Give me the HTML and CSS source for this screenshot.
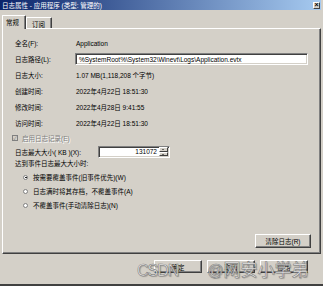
FILE: index.html
```html
<!DOCTYPE html>
<html lang="zh">
    <head>
        <meta charset="UTF-8">
        <meta name="viewport" content="width=device-width, initial-scale=1.0">
        <title>日志属性</title>
        <link rel="stylesheet" href="styles.css">
    </head>
    <body>
        <div class="window">
            <div class="titlebar">
                <span class="title">日志属性 - 应用程序 (类型: 管理的)</span>
                <span class="close">×</span>
            </div>
            <div class="tabs">
                <div class="tab active">常规</div>
                <div class="tab">订阅</div>
            </div>
            <div class="panel">
                <div class="row"><span class="label">全名(F):</span><span>Application</span></div>
                <div class="row"><span class="label">日志路径(L):</span><div class="field path">%SystemRoot%\System32\Winevt\Logs\Application.evtx</div></div>
                <div class="row"><span class="label">日志大小:</span><span>1.07 MB(1,118,208 个字节)</span></div>
                <div class="row"><span class="label">创建时间:</span><span>2022年4月22日 18:51:30</span></div>
                <div class="row"><span class="label">修改时间:</span><span>2022年4月28日 9:41:55</span></div>
                <div class="row"><span class="label">访问时间:</span><span>2022年4月22日 18:51:30</span></div>

                <div class="check"><span class="box">✓</span>启用日志记录(E)</div>

                <div class="row size">
                    <span class="label wide">日志最大大小( KB )(X):</span>
                    <div class="field spin">
                        <span class="num">131072</span>
                        <span class="arrows"><i class="up"></i><i class="down"></i></span>
                    </div>
                </div>
                <div class="when">达到事件日志最大大小时:</div>
                <div class="radios">
                    <div class="radio"><span class="dot on"></span>按需要覆盖事件(旧事件优先)(W)</div>
                    <div class="radio"><span class="dot"></span>日志满时将其存档，不覆盖事件(A)</div>
                    <div class="radio"><span class="dot"></span>不覆盖事件(手动清除日志)(N)</div>
                </div>
                <div class="actions"><button class="btn clear">清除日志(R)</button></div>
            </div>
            <div class="buttons">
                <button class="btn">确定</button>
                <button class="btn">取消</button>
                <button class="btn">应用</button>
            </div>
            <div class="watermark"><span class="wm-latin">CSDN</span><span class="wm-at">@</span><span class="wm-cjk">网安小学弟</span></div>
        </div>
    </body>
</html>
```

FILE: styles.css
```css
* {
    box-sizing: border-box;
    margin: 0;
}

body {
    background-color: #d4d0c8;
    font-family: "Liberation Sans", "Noto Sans CJK SC", sans-serif;
    font-size: 6.5px;
    color: #000;
}

.window {
    position: relative;
    width: 323px;
    height: 286px;
    padding-right: 2px;
    border-bottom: 2px solid #404040;
    display: flex;
    flex-direction: column;
}

.titlebar {
    height: 10px;
    background: linear-gradient(to right, #0a246a, #a6caf0);
    color: #fff;
    display: flex;
    align-items: center;
    justify-content: space-between;
    padding: 0 1px 0 2px;
}

.close {
    width: 7px;
    height: 7px;
    background-color: #d4d0c8;
    border: 1px solid;
    border-color: #fff #404040 #404040 #fff;
    color: #000;
    font-size: 7px;
    line-height: 4px;
    text-align: center;
    font-weight: bold;
}

.tabs {
    height: 18px;
    display: flex;
    align-items: flex-end;
    padding-left: 2px;
}

.tab {
    height: 11px;
    width: 26px;
    padding-left: 5px;
    padding-top: 1px;
    border: 1px solid;
    border-bottom: 0;
    border-color: #fff #404040 #fff #fff;
    box-shadow: inset -1px 0 #808080;
    border-radius: 1px 1px 0 0;
}

.tab.active {
    height: 14px;
    width: 24px;
    padding-left: 3px;
    margin-bottom: -1px;
    background-color: #d4d0c8;
    position: relative;
    z-index: 1;
}

.panel {
    height: 226px;
    margin-left: 2px;
    border: 1px solid;
    border-color: #fff #404040 #404040 #fff;
    box-shadow: inset -1px -1px #808080;
    padding: 6px 9px 5px 9px;
    display: flex;
    flex-direction: column;
}

.row {
    height: 16px;
    display: flex;
    align-items: center;
    padding-left: 3px;
    white-space: nowrap;
}

.label {
    width: 61px;
    flex-shrink: 0;
}

.label.wide {
    width: 83px;
}

.field {
    height: 12px;
    background-color: #fff;
    border: 1px solid;
    border-color: #808080 #fff #fff #808080;
    box-shadow: inset 1px 1px #404040, inset -1px -1px #d4d0c8;
    display: flex;
    align-items: center;
}

.path {
    width: 233px;
    margin-left: -1px;
    padding-left: 3px;
}

.check {
    height: 13px;
    display: flex;
    align-items: center;
    gap: 4px;
    color: #808080;
    text-shadow: 1px 1px #fff;
}

.box {
    width: 6px;
    height: 6px;
    border: 1px solid #808080;
    background-color: #d4d0c8;
    font-size: 5px;
    line-height: 4px;
    text-align: center;
    text-shadow: none;
}

.size {
    height: 15px;
}

.spin {
    width: 72px;
    justify-content: flex-end;
    padding-right: 1px;
}

.num {
    margin-right: 2px;
}

.arrows {
    width: 9px;
    height: 9px;
    display: flex;
    flex-direction: column;
}

.arrows i {
    flex: 1;
    background-color: #d4d0c8;
    border: 1px solid;
    border-color: #fff #404040 #404040 #fff;
    position: relative;
}

.arrows i::after {
    content: "";
    position: absolute;
    left: 2px;
    top: 1px;
    border-left: 1.5px solid transparent;
    border-right: 1.5px solid transparent;
}

.arrows .up::after {
    border-bottom: 1.5px solid #000;
}

.arrows .down::after {
    border-top: 1.5px solid #000;
}

.when {
    height: 8px;
    padding-left: 3px;
    display: flex;
    align-items: center;
}

.radios {
    margin-top: 3px;
    padding-left: 11px;
}

.radio {
    height: 14px;
    display: flex;
    align-items: center;
    gap: 5px;
}

.dot {
    width: 5px;
    height: 5px;
    border-radius: 50%;
    background-color: #fff;
    border: 1px solid #808080;
    position: relative;
}

.dot.on::after {
    content: "";
    position: absolute;
    left: 1px;
    top: 1px;
    width: 1.5px;
    height: 1.5px;
    border-radius: 50%;
    background-color: #000;
}

.actions {
    margin-top: auto;
    display: flex;
    justify-content: flex-end;
}

.btn {
    height: 13px;
    width: 48px;
    padding: 0;
    background-color: #d4d0c8;
    border: 1px solid;
    border-color: #fff #404040 #404040 #fff;
    box-shadow: inset -1px -1px #808080;
    font-family: inherit;
    font-size: 6.5px;
    color: #000;
}

.clear {
    width: 56px;
    height: 14px;
}

.buttons {
    margin-top: 6px;
    display: flex;
    justify-content: flex-end;
    gap: 5px;
    padding-right: 13px;
}

.watermark {
    position: absolute;
    left: 137px;
    top: 256px;
    display: flex;
    align-items: baseline;
    color: rgba(248, 248, 248, 0.9);
    -webkit-text-stroke: 0.6px #7a7a7a;
    text-shadow: 1px 1px 1px rgba(0, 0, 0, 0.25);
    white-space: nowrap;
}

.wm-latin {
    font-size: 16px;
    letter-spacing: -1px;
}

.wm-at {
    font-size: 16px;
    margin-left: 29px;
}

.wm-cjk {
    font-size: 17px;
}
```
